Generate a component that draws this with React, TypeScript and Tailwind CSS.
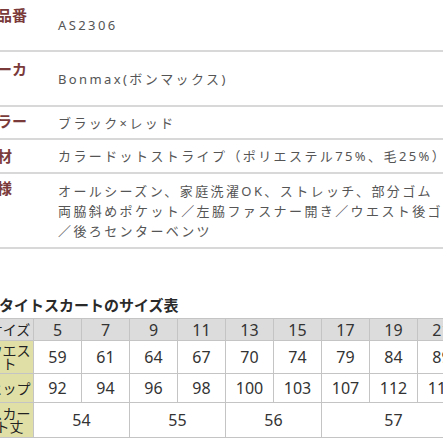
import type { FC } from 'react';

type SpecRow = { label: string[]; value: string[]; h: string; pt: string };

const specs: SpecRow[] = [
  { label: ['商品番', '号'], value: ['AS2306'], h: 'h-[52px]', pt: 'pt-[6px]' },
  { label: ['メーカ', 'ー'], value: ['Bonmax(ボンマックス)'], h: 'h-[55px]', pt: 'pt-[8px]' },
  { label: ['カラー'], value: ['ブラック×レッド'], h: 'h-[33px]', pt: 'pt-[5px]' },
  { label: ['素材'], value: ['カラードットストライプ（ポリエステル75%、毛25%）'], h: 'h-[34px]', pt: 'pt-[7px]' },
  {
    label: ['仕様'],
    value: [
      'オールシーズン、家庭洗濯OK、ストレッチ、部分ゴム',
      '両脇斜めポケット／左脇ファスナー開き／ウエスト後ゴム',
      '／後ろセンターベンツ',
    ],
    h: 'h-[75px]',
    pt: 'pt-[5px]',
  },
];

const sizes = ['5', '7', '9', '11', '13', '15', '17', '19', '21'];
const waist = ['59', '61', '64', '67', '70', '74', '79', '84', '89'];
const hip = ['92', '94', '96', '98', '100', '103', '107', '112', '116'];
const length = [
  { v: '54', span: 2 },
  { v: '55', span: 2 },
  { v: '56', span: 2 },
  { v: '57', span: 3 },
];

const cell = 'border border-[#c4c4c4] text-center align-middle p-0';
const labelCell = 'border border-[#c4c4c4] bg-[#e0dfa6] text-center align-middle px-[2px] py-0 text-[14px] leading-[13px] text-[#222]';

const App: FC = () => {
  return (
    <div className="w-[443px] h-[443px] overflow-hidden bg-white font-['Noto_Sans','Noto_Sans_CJK_JP',sans-serif]">
      <div className="-ml-[18px]">
        {specs.map((row, i) => (
          <div key={i} className={`flex border-b-2 border-[#d8d8d8] ${row.h}`}>
            <div className={`w-[50px] shrink-0 text-[15px] leading-[19px] font-bold text-[#7b3a3a] whitespace-nowrap overflow-hidden ${row.pt}`}>
              {row.label.map((l, j) => (
                <div key={j}>{l}</div>
              ))}
            </div>
            <div className="ml-[26px] flex flex-col justify-center text-[13px] leading-[20px] tracking-[2.4px] text-[#555] whitespace-nowrap">
              {row.value.map((v, j) => (
                <div key={j}>{v}</div>
              ))}
            </div>
          </div>
        ))}
      </div>

      <div className="mt-[46px] -ml-[1px] text-[15px] leading-[20px] font-bold text-[#2a2a2a] whitespace-nowrap">
        タイトスカートのサイズ表
      </div>

      <table className="mt-[3px] -ml-[15px] w-[480px] table-fixed border-collapse text-[16px] text-[#333]">
        <colgroup>
          {Array.from({ length: 10 }).map((_, i) => (
            <col key={i} className="w-[48px]" />
          ))}
        </colgroup>
        <tbody>
          <tr className="h-[22px] bg-[#dcdcdc]">
            <td className={`${cell} text-[14px] leading-[13px] text-[#222]`}>サイズ</td>
            {sizes.map((s) => (
              <td key={s} className={`${cell} leading-[20px]`}>{s}</td>
            ))}
          </tr>
          <tr className="h-[33px]">
            <td className={labelCell}>ウエスト</td>
            {waist.map((s, i) => (
              <td key={i} className={cell}>{s}</td>
            ))}
          </tr>
          <tr className="h-[29px]">
            <td className={labelCell}>ヒップ</td>
            {hip.map((s, i) => (
              <td key={i} className={cell}>{s}</td>
            ))}
          </tr>
          <tr className="h-[35px]">
            <td className={labelCell}>スカート丈</td>
            {length.map((s, i) => (
              <td key={i} colSpan={s.span} className={cell}>{s.v}</td>
            ))}
          </tr>
        </tbody>
      </table>
    </div>
  );
};

export default App;
